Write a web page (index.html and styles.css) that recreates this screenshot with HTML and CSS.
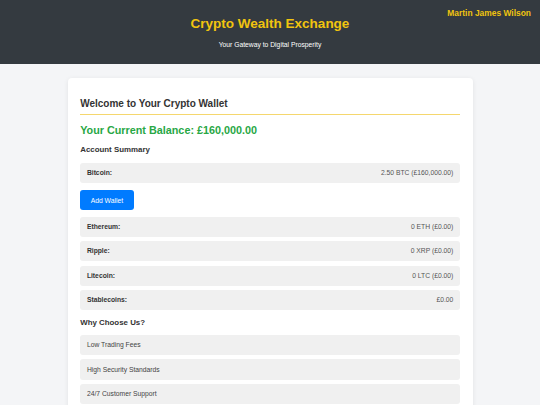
FILE: index.html
```html
<!DOCTYPE html>
<html lang="en">
<head>
<meta charset="utf-8">
<title>Crypto Wealth Exchange</title>
<link rel="stylesheet" href="styles.css">
</head>
<body>
<header class="site-header">
  <h1 class="site-title">Crypto Wealth Exchange</h1>
  <p class="site-tagline">Your Gateway to Digital Prosperity</p>
  <div class="user-name">Martin James Wilson</div>
</header>
<main class="wallet-card">
  <h2 class="wallet-title">Welcome to Your Crypto Wallet</h2>
  <h3 class="balance">Your Current Balance: £160,000.00</h3>
  <h3 class="section-title">Account Summary</h3>
  <div class="rows">
    <div class="row"><span class="row-label">Bitcoin:</span><span class="row-value">2.50 BTC (£160,000.00)</span></div>
  </div>
  <button class="add-btn" type="button">Add Wallet</button>
  <div class="rows rows-after">
    <div class="row"><span class="row-label">Ethereum:</span><span class="row-value">0 ETH (£0.00)</span></div>
    <div class="row"><span class="row-label">Ripple:</span><span class="row-value">0 XRP (£0.00)</span></div>
    <div class="row"><span class="row-label">Litecoin:</span><span class="row-value">0 LTC (£0.00)</span></div>
    <div class="row"><span class="row-label">Stablecoins:</span><span class="row-value">£0.00</span></div>
  </div>
  <h3 class="section-title why">Why Choose Us?</h3>
  <ul class="features">
    <li class="feature">Low Trading Fees</li>
    <li class="feature">High Security Standards</li>
    <li class="feature">24/7 Customer Support</li>
  </ul>
</main>
</body>
</html>
```
FILE: styles.css
```css
* { box-sizing: border-box; }
html, body { margin: 0; padding: 0; }
body {
  background: #f4f5f7;
  font-family: "Liberation Sans", Arial, sans-serif;
  color: #333;
}
.site-header {
  position: relative;
  height: 64px;
  background: #343a40;
  text-align: center;
  padding-top: 16.3px;
}
.site-title {
  margin: 0;
  font-size: 13.5px;
  line-height: 16px;
  font-weight: bold;
  color: #f1c40f;
}
.site-tagline {
  margin: 8.9px 0 0;
  font-size: 6.75px;
  line-height: 8px;
  color: #ffffff;
}
.user-name {
  position: absolute;
  top: 7.8px;
  right: 9px;
  font-size: 8.44px;
  line-height: 10px;
  font-weight: bold;
  color: #f1c40f;
}
.wallet-card {
  width: 405px;
  margin: 13.5px auto 0;
  background: #fff;
  border-radius: 4px;
  box-shadow: 0 1px 5px rgba(0,0,0,0.08);
  padding: 12.7px 12.7px 20px;
}
.wallet-title {
  margin: 8px 0 0;
  font-size: 10px;
  line-height: 12px;
  font-weight: bold;
  color: #333;
  padding-bottom: 4px;
  border-bottom: 1px solid #f5d76e;
}
.balance {
  margin: 9px 0 0;
  font-size: 10.8px;
  line-height: 12px;
  font-weight: bold;
  color: #28a745;
}
.section-title {
  margin: 9.2px 0 0;
  font-size: 7.9px;
  line-height: 9px;
  font-weight: bold;
  color: #333;
}
.rows {
  display: flex;
  flex-direction: column;
  gap: 4.2px;
  margin-top: 8.5px;
}
.rows-after { margin-top: 6.5px; }
.row {
  display: flex;
  justify-content: space-between;
  align-items: center;
  background: #f0f0f0;
  border-radius: 3px;
  padding: 6.3px 6.5px 6.3px 6.7px;
  font-size: 6.75px;
  line-height: 7.7px;
}
.row-label { font-weight: bold; color: #333; }
.row-value { color: #555; }
.add-btn {
  display: block;
  margin-top: 7px;
  height: 20px;
  padding: 0 10.5px;
  border: none;
  border-radius: 3px;
  background: #007bff;
  color: #fff;
  font-family: "Liberation Sans", Arial, sans-serif;
  font-size: 6.75px;
}
.why { margin-top: 7.2px; }
.features {
  list-style: none;
  margin: 8.2px 0 0;
  padding: 0;
  display: flex;
  flex-direction: column;
  gap: 4.2px;
}
.feature {
  background: #f0f0f0;
  border-radius: 3px;
  padding: 6.3px 6.7px;
  font-size: 6.75px;
  line-height: 7.7px;
  color: #444;
}
```
